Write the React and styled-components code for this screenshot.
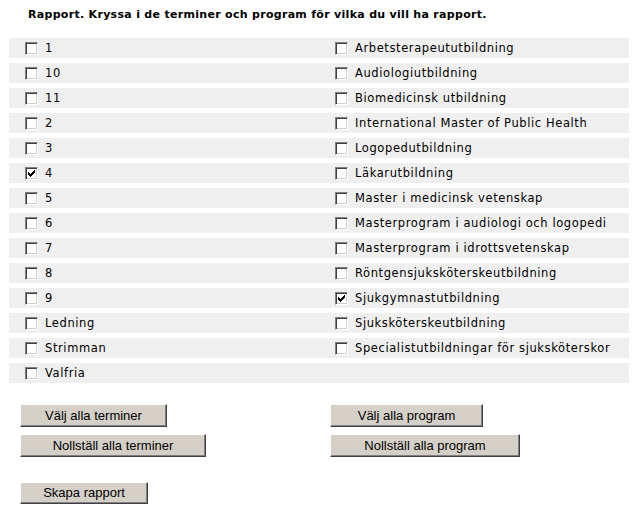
import React from "react";
import styled, { createGlobalStyle } from "styled-components";

const Global = createGlobalStyle`
  html, body { margin: 0; padding: 0; background: #ffffff; }
  body { font-family: "DejaVu Sans", Verdana, sans-serif; color: #000; }
`;

const Page = styled.div`
  width: 635px;
  height: 512px;
  box-sizing: border-box;
  padding-top: 8px;
`;

const Heading = styled.h1`
  margin: 0 0 0 28px;
  height: 30px;
  font-family: "DejaVu Sans", Verdana, sans-serif;
  font-size: 11px;
  font-weight: bold;
  letter-spacing: 0.3px;
  line-height: 13px;
`;

const Table = styled.div`
  margin-left: 9px;
  width: 620px;
  display: grid;
  grid-template-columns: 310px 310px;
  row-gap: 5px;
`;

const Cell = styled.label`
  height: 20px;
  background: #efefef;
  display: flex;
  align-items: center;
  padding-left: 16px;
  gap: 7px;
  font-family: "DejaVu Sans", Verdana, sans-serif;
  font-size: 11.5px;
  letter-spacing: 0.6px;
  line-height: 13px;
  color: #000;
  white-space: nowrap;
`;

const Box = styled.span`
  width: 13px;
  height: 13px;
  box-sizing: border-box;
  flex: none;
  background: #ffffff;
  border-top: 1px solid #808080;
  border-left: 1px solid #808080;
  border-right: 1px solid #ffffff;
  border-bottom: 1px solid #ffffff;
  box-shadow: inset 1px 1px 0 #404040, inset -1px -1px 0 #d4d0c8;
  display: flex;
  align-items: center;
  justify-content: center;
`;

const Check = () => (
  <svg width="7" height="7" viewBox="0 0 7 7" style={{ display: "block" }}>
    <path d="M0 2h1v1h1v1h1V3h1V2h1V1h1V0h1v3H6v1H5v1H4v1H3v1H2V6H1V5H0z" fill="#000" />
  </svg>
);

const Buttons = styled.div`
  margin-top: 21px;
  display: grid;
  grid-template-columns: 310px 300px;
  padding-left: 20px;
`;

const Column = styled.div`
  display: flex;
  flex-direction: column;
  align-items: flex-start;
  gap: 7px;
`;

const Button = styled.button`
  width: ${(p) => p.$w}px;
  height: ${(p) => p.$h || 23}px;
  margin: 0;
  padding: 0;
  background: #d4d0c8;
  border-top: 1px solid #ffffff;
  border-left: 1px solid #ffffff;
  border-right: 1px solid #404040;
  border-bottom: 1px solid #404040;
  box-shadow: inset -1px -1px 0 #808080;
  font-family: "Liberation Sans", Arial, sans-serif;
  font-size: 13px;
  color: #000;
  text-align: center;
  line-height: 20px;
`;

const Spacer = styled.div`
  height: 11px;
`;

const terms = ["1", "10", "11", "2", "3", "4", "5", "6", "7", "8", "9", "Ledning", "Strimman", "Valfria"];
const programs = [
  "Arbetsterapeututbildning",
  "Audiologiutbildning",
  "Biomedicinsk utbildning",
  "International Master of Public Health",
  "Logopedutbildning",
  "Läkarutbildning",
  "Master i medicinsk vetenskap",
  "Masterprogram i audiologi och logopedi",
  "Masterprogram i idrottsvetenskap",
  "Röntgensjuksköterskeutbildning",
  "Sjukgymnastutbildning",
  "Sjuksköterskeutbildning",
  "Specialistutbildningar för sjuksköterskor",
  null,
];
const checked = new Set(["4", "Sjukgymnastutbildning"]);

export default function App() {
  return (
    <Page>
      <Global />
      <Heading>Rapport. Kryssa i de terminer och program för vilka du vill ha rapport.</Heading>
      <Table>
        {terms.map((t, i) => (
          <React.Fragment key={t}>
            <Cell>
              <Box>{checked.has(t) && <Check />}</Box>
              {t}
            </Cell>
            <Cell>
              {programs[i] && (
                <>
                  <Box>{checked.has(programs[i]) && <Check />}</Box>
                  {programs[i]}
                </>
              )}
            </Cell>
          </React.Fragment>
        ))}
      </Table>
      <Buttons>
        <Column>
          <Button $w={147}>Välj alla terminer</Button>
          <Button $w={186}>Nollställ alla terminer</Button>
          <Spacer />
          <Button $w={128} $h={22}>Skapa rapport</Button>
        </Column>
        <Column>
          <Button $w={153}>Välj alla program</Button>
          <Button $w={190}>Nollställ alla program</Button>
        </Column>
      </Buttons>
    </Page>
  );
}
